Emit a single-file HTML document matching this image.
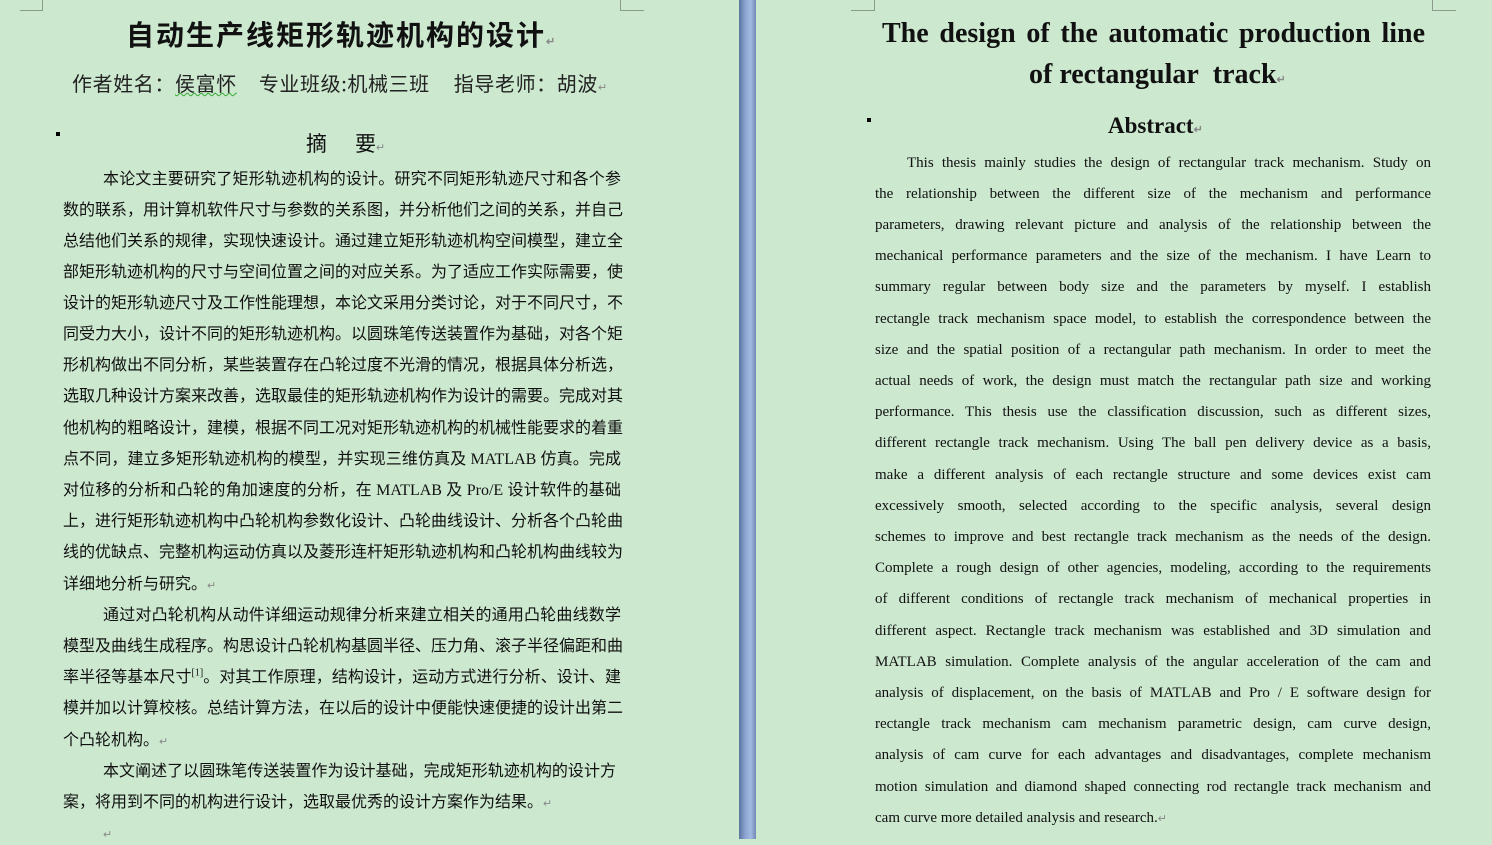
<!DOCTYPE html>
<html><head><meta charset="utf-8"><style>
body{margin:0;width:1492px;height:839px;background:#cce8cf;position:relative;overflow:hidden;font-family:"Liberation Serif","Noto Serif CJK SC","Noto Sans CJK SC",serif;color:#111}
.l{position:absolute;left:63px;width:558px;font-size:16px;line-height:20px;white-space:nowrap;text-align:justify;text-align-last:justify;font-family:"Liberation Serif","Noto Sans CJK SC",sans-serif}
.r{position:absolute;left:875px;width:556px;font-size:15px;line-height:20px;white-space:nowrap;text-align:justify;text-align-last:justify}
.nl{text-align-last:left}
.p{color:#888;font-size:11px}
.bar{position:absolute;left:739px;top:0;width:17px;height:839px;background:linear-gradient(90deg,#5a74a0,#8fa8d4 40%,#a2bae0 70%,#7088b4);}
.c{position:absolute;border-color:#8a9a8c;border-style:solid;border-width:0}
sup{line-height:0;font-size:10px}
</style></head><body>
<div class="c" style="left:20px;top:0;width:22px;height:10px;border-right-width:1px;border-bottom-width:1px"></div>
<div class="c" style="left:620px;top:0;width:23px;height:10px;border-left-width:1px;border-bottom-width:1px"></div>
<div class="c" style="left:851px;top:0;width:23px;height:10px;border-right-width:1px;border-bottom-width:1px"></div>
<div class="c" style="left:1432px;top:0;width:23px;height:10px;border-left-width:1px;border-bottom-width:1px"></div>
<div class="bar"></div>

<div style="position:absolute;left:126px;top:14px;font-size:28px;font-weight:bold;letter-spacing:2px;font-family:'Noto Sans CJK SC',sans-serif">自动生产线矩形轨迹机构的设计<span class="p">↵</span></div>
<div style="position:absolute;left:72px;top:68px;font-size:20px;letter-spacing:0.6px;font-family:'Noto Sans CJK SC',sans-serif;color:#222;white-space:nowrap">作者姓名：<span style="text-decoration:underline wavy #3a3;text-decoration-thickness:1px">侯富怀</span><span style="display:inline-block;width:22px"></span>专业班级:机械三班<span style="display:inline-block;width:24px"></span>指导老师：胡波<span class="p">↵</span></div>
<div style="position:absolute;left:56px;top:132px;width:4px;height:4px;background:#000"></div>
<div style="position:absolute;left:306px;top:128px;font-size:21px;font-family:'Noto Sans CJK SC',sans-serif;white-space:nowrap">摘<span style="display:inline-block;width:28px"></span>要<span class="p">↵</span></div>

<div class="l" style="top:170px;left:103px;width:518px">本论文主要研究了矩形轨迹机构的设计。研究不同矩形轨迹尺寸和各个参</div>
<div class="l" style="top:201px">数的联系，用计算机软件尺寸与参数的关系图，并分析他们之间的关系，并自己</div>
<div class="l" style="top:232px">总结他们关系的规律，实现快速设计。通过建立矩形轨迹机构空间模型，建立全</div>
<div class="l" style="top:263px">部矩形轨迹机构的尺寸与空间位置之间的对应关系。为了适应工作实际需要，使</div>
<div class="l" style="top:294px">设计的矩形轨迹尺寸及工作性能理想，本论文采用分类讨论，对于不同尺寸，不</div>
<div class="l" style="top:325px">同受力大小，设计不同的矩形轨迹机构。以圆珠笔传送装置作为基础，对各个矩</div>
<div class="l" style="top:356px">形机构做出不同分析，某些装置存在凸轮过度不光滑的情况，根据具体分析选，</div>
<div class="l" style="top:387px">选取几种设计方案来改善，选取最佳的矩形轨迹机构作为设计的需要。完成对其</div>
<div class="l" style="top:419px">他机构的粗略设计，建模，根据不同工况对矩形轨迹机构的机械性能要求的着重</div>
<div class="l" style="top:450px">点不同，建立多矩形轨迹机构的模型，并实现三维仿真及 MATLAB 仿真。完成</div>
<div class="l" style="top:481px">对位移的分析和凸轮的角加速度的分析，在 MATLAB 及 Pro/E 设计软件的基础</div>
<div class="l" style="top:512px">上，进行矩形轨迹机构中凸轮机构参数化设计、凸轮曲线设计、分析各个凸轮曲</div>
<div class="l" style="top:543px">线的优缺点、完整机构运动仿真以及菱形连杆矩形轨迹机构和凸轮机构曲线较为</div>
<div class="l nl" style="top:575px">详细地分析与研究。<span class="p">↵</span></div>
<div class="l" style="top:606px;left:103px;width:518px">通过对凸轮机构从动件详细运动规律分析来建立相关的通用凸轮曲线数学</div>
<div class="l" style="top:637px">模型及曲线生成程序。构思设计凸轮机构基圆半径、压力角、滚子半径偏距和曲</div>
<div class="l" style="top:668px">率半径等基本尺寸<sup>[1]</sup>。对其工作原理，结构设计，运动方式进行分析、设计、建</div>
<div class="l" style="top:699px">模并加以计算校核。总结计算方法，在以后的设计中便能快速便捷的设计出第二</div>
<div class="l nl" style="top:731px">个凸轮机构。<span class="p">↵</span></div>
<div class="l" style="top:762px;left:103px;width:513px">本文阐述了以圆珠笔传送装置作为设计基础，完成矩形轨迹机构的设计方</div>
<div class="l nl" style="top:793px">案，将用到不同的机构进行设计，选取最优秀的设计方案作为结果。<span class="p">↵</span></div>
<div class="l nl" style="top:824px;left:103px"><span class="p">↵</span></div>

<div style="position:absolute;left:882px;top:17px;width:543px;font-size:28px;font-weight:bold;line-height:34px;text-align:justify;text-align-last:justify;white-space:nowrap">The design of the automatic production line</div>
<div style="position:absolute;left:1029px;top:58px;font-size:28px;font-weight:bold;line-height:34px;white-space:nowrap">of rectangular&nbsp; track<span class="p">↵</span></div>
<div style="position:absolute;left:867px;top:118px;width:4px;height:4px;background:#000"></div>
<div style="position:absolute;left:1108px;top:113px;font-size:23px;font-weight:bold">Abstract<span class="p">↵</span></div>

<div class="r" style="top:153px;left:907px;width:524px">This thesis mainly studies the design of rectangular track mechanism. Study on</div>
<div class="r" style="top:184px">the relationship between the different size of the mechanism and performance</div>
<div class="r" style="top:215px">parameters, drawing relevant picture and analysis of the relationship between the</div>
<div class="r" style="top:246px">mechanical performance parameters and the size of the mechanism. I have Learn to</div>
<div class="r" style="top:277px">summary regular between body size and the parameters by myself. I establish</div>
<div class="r" style="top:309px">rectangle track mechanism space model, to establish the correspondence between the</div>
<div class="r" style="top:340px">size and the spatial position of a rectangular path mechanism. In order to meet the</div>
<div class="r" style="top:371px">actual needs of work, the design must match the rectangular path size and working</div>
<div class="r" style="top:402px">performance. This thesis use the classification discussion, such as different sizes,</div>
<div class="r" style="top:433px">different rectangle track mechanism. Using The ball pen delivery device as a basis,</div>
<div class="r" style="top:465px">make a different analysis of each rectangle structure and some devices exist cam</div>
<div class="r" style="top:496px">excessively smooth, selected according to the specific analysis, several design</div>
<div class="r" style="top:527px">schemes to improve and best rectangle track mechanism as the needs of the design.</div>
<div class="r" style="top:558px">Complete a rough design of other agencies, modeling, according to the requirements</div>
<div class="r" style="top:589px">of different conditions of rectangle track mechanism of mechanical properties in</div>
<div class="r" style="top:621px">different aspect. Rectangle track mechanism was established and 3D simulation and</div>
<div class="r" style="top:652px">MATLAB simulation. Complete analysis of the angular acceleration of the cam and</div>
<div class="r" style="top:683px">analysis of displacement, on the basis of MATLAB and Pro / E software design for</div>
<div class="r" style="top:714px">rectangle track mechanism cam mechanism parametric design, cam curve design,</div>
<div class="r" style="top:745px">analysis of cam curve for each advantages and disadvantages, complete mechanism</div>
<div class="r" style="top:777px">motion simulation and diamond shaped connecting rod rectangle track mechanism and</div>
<div class="r nl" style="top:808px">cam curve more detailed analysis and research.<span class="p">↵</span></div>
</body></html>
